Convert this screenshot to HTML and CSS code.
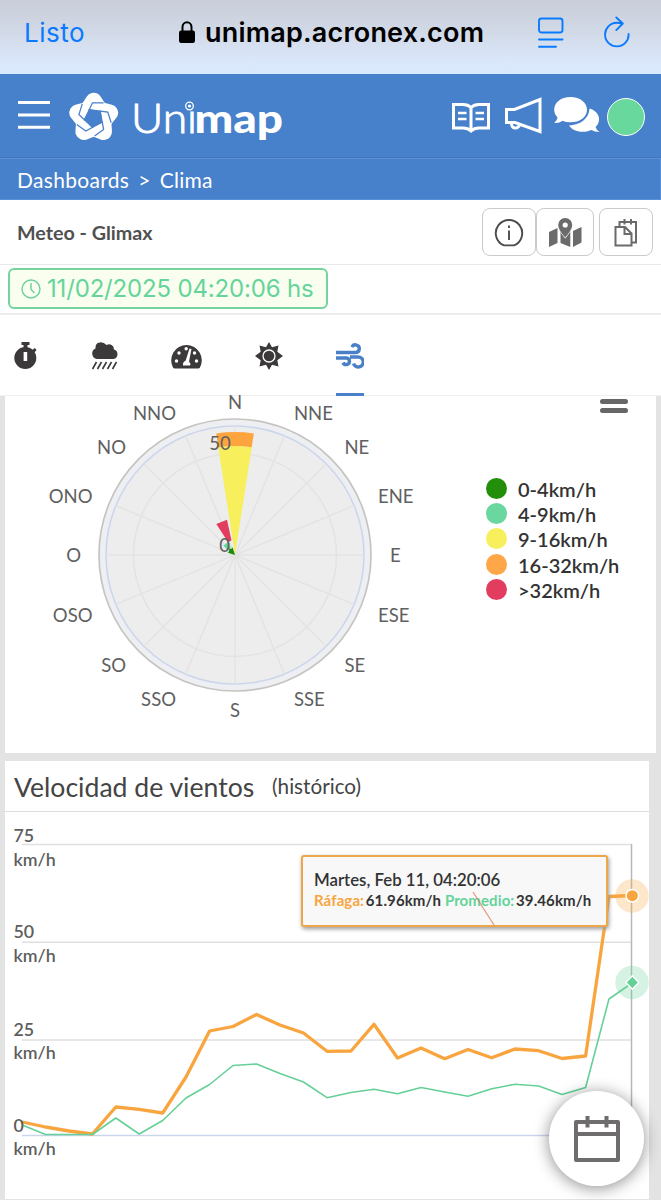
FILE: index.html
```html
<!DOCTYPE html>
<html lang="es">
<head>
    <meta charset="UTF-8">
    <title>Unimap - Clima</title>
    <link rel="stylesheet" href="styles.css">
</head>
<body>
    <!-- barra del navegador -->
    <div class="browserBar">
        <a class="done">Listo</a>
        <div class="url">
            <svg width="16" height="22" viewBox="0 0 16 22"><path d="M3.5 11V6a4.5 4.8 0 0 1 9 0v5" fill="none" stroke="#000" stroke-width="2"/><rect x="0" y="9.5" width="16" height="12.5" rx="2.2"/></svg>
            <span>unimap.acronex.com</span>
        </div>
        <svg class="reader" width="26" height="32" viewBox="0 0 26 32" fill="none" stroke="#0a7aff" stroke-width="1.9" stroke-linecap="round"><rect x="1" y="2.5" width="23.5" height="14" rx="2.5"/><path d="M1 23.5h23.5M1 30.7h17"/></svg>
        <svg class="reload" width="26" height="32" viewBox="0 0 26 32" fill="none" stroke="#0a7aff" stroke-width="1.9" stroke-linecap="round" stroke-linejoin="round"><path d="M24.6 18A11.8 11.8 0 1 1 12.8 6.8c2 0 4 .3 5.500.8M12.3 1.500l6.500 6-6.500 6.600"/></svg>
    </div>

    <header>
        <svg class="burger" width="32" height="30" viewBox="0 0 32 30" stroke="#fff" stroke-width="3"><path d="M0 2.5h32M0 15h32M0 27.3h32"/></svg>
        <svg class="logo" width="216" height="52" viewBox="68 91 216 52">
            <defs>
                <path id="lobe" d="M-5.5 -7.5L0 -16.3L5.5 -7.5"/>
                <path id="gap" d="M-9.2 2.3L-1.2 -14.6H9.5"/>
            </defs>
            <g transform="translate(93.7 118) scale(1.04)">
                <g class="lobes">
                    <use href="#lobe"/>
                    <use href="#lobe" transform="rotate(72)"/>
                    <use href="#lobe" transform="rotate(144)"/>
                    <use href="#lobe" transform="rotate(216)"/>
                    <use href="#lobe" transform="rotate(288)"/>
                </g>
                <path class="hole" d="M-3.8 -8.5L6.9 -6.2L8.1 4.6L-1.9 9.1L-9.2 1z"/>
                <g class="gaps">
                    <use href="#gap"/>
                    <use href="#gap" transform="rotate(72)"/>
                    <use href="#gap" transform="rotate(144)"/>
                    <use href="#gap" transform="rotate(216)"/>
                    <use href="#gap" transform="rotate(288)"/>
                </g>
            </g>
            <text x="131" y="133" class="logoThin" textLength="66" lengthAdjust="spacingAndGlyphs">Unı</text>
            <text x="194.5" y="133" class="logoBold" textLength="88.5" lengthAdjust="spacingAndGlyphs">map</text>
            <circle cx="189.5" cy="106" r="3.8" fill="#4780cb" stroke="#fff" stroke-width="1.3"/>
            <circle cx="189.5" cy="106" r="1.6" fill="#fff"/>
        </svg>
        <svg class="book" width="38" height="31" viewBox="0 0 38 31" fill="none" stroke="#fff" stroke-width="3"><path d="M1.5 2.5H11q5 0 8 3q3-3 8-3h9.5v23.5H27q-5 0-8 3q-3-3-8-3H1.5zM19 5v23"/><path d="M6 11h8.5M6 17h8.5M23.5 11H32M23.5 17H32" stroke-width="2.5"/></svg>
        <svg class="horn" width="37" height="37" viewBox="0 0 37 37" fill="none" stroke="#fff" stroke-width="3"><path d="M1.5 12.5h8L35 2.5v32L10 25.5H1.5z"/><path d="M6.5 26.5a4 4 0 1 0 8 1"/></svg>
        <svg class="chat" width="46" height="36" viewBox="0 0 46 36" fill="#fff"><path d="M35.5 11.5C42 13.5 45.5 18 45 23c-.2 3-1.5 5-3.5 7q1 3 4 5-5 0-8-2c-10 4-19 1-22.5-4.5C26 28 35 22 35.5 11.5z"/><path d="M16.5 0C26 0 33 5.5 33 12.7S26 25.3 16.5 25.3q-4.5 0-8-1.6Q5 26.3.3 25.8 3.5 23.5 3.5 20.3.2 17 .2 12.7C.2 5.5 7 0 16.5 0z"/></svg>
        <span class="avatar"></span>
    </header>

    <nav class="breadcrumb"><a>Dashboards</a><span>&gt;</span><a>Clima</a></nav>

    <section class="titleBar">
        <h1>Meteo - Glimax</h1>
        <button class="info"><svg width="30" height="30" viewBox="0 0 30 30" fill="none" stroke="#4c4c4c" stroke-width="1.9"><path d="M10 27.4a13.2 13.2 0 1 1 10 0z"/><path d="M15 12.5v9.5"/><path d="M15 7.5v2.5"/></svg></button>
        <button class="map"><svg width="33" height="30" viewBox="0 0 33 30" fill="#6b6b6b"><path d="M0 14l8.5-4v15L0 29zM11.5 10q1 5 4.5 9 4-4 5.3-8.5V29l-9.8-4zM24 13l8.5-4v15.5L24 29z"/><path fill-rule="evenodd" d="M16.2 0a7 7 0 0 1 7 7c0 4-4 9-7 12.5-3-3.5-7-8.5-7-12.5a7 7 0 0 1 7-7zm0 4.4a2.6 2.6 0 1 0 0 5.2 2.6 2.6 0 0 0 0-5.2z" stroke="#fff" stroke-width="1.2" paint-order="stroke"/></svg></button>
        <button class="copy"><svg width="24" height="28" viewBox="0 0 24 28" fill="none" stroke="#6b6b6b" stroke-width="2"><path d="M5.5 7V3H22v20.5h-4M10.5 0v5.5M17 0v5.5"/><path d="M1.5 8h9.5l6.5 6.5V26.5h-16zM10.5 8v7h7"/></svg></button>
    </section>

    <section class="dateBar">
        <div class="date">
            <svg width="20" height="20" viewBox="0 0 20 20" fill="none" stroke="#6ad19b" stroke-width="1.4"><circle cx="10" cy="10" r="9"/><path d="M10 4v6.5l3.5 3.5"/></svg>
            <span>11/02/2025 04:20:06 hs</span>
        </div>
    </section>

    <section class="tabs">
        <a><svg width="24" height="28" viewBox="0 0 24 28" fill="#3b393a"><path d="M7.5 0h8v3h-2v3h-4V3h-2zM18 8l3-2 1.5 2-2 2.5z"/><path fill-rule="evenodd" d="M11.3 5a11 11 0 1 1 0 22 11 11 0 0 1 0-22zM9.6 10v9h3.6v-9z"/></svg></a>
        <a><svg width="28" height="28" viewBox="0 0 28 28"><path fill="#3b393a" d="M6 17a5.5 5.5 0 0 1-1.5-10.5C4.5 2 6.5.5 10 .3q3 0 5.5 2.7a5 5 0 0 1 7.5 4.5A4.9 4.9 0 0 1 22.5 17z"/><path d="M5.5 20l-4 7M10.5 20l-4 7M15.5 20l-4 7M20.5 20l-4 7M25.5 20l-4 7" stroke="#3b393a" stroke-width="1.6"/></svg></a>
        <a><svg width="31" height="26" viewBox="0 0 31 26"><path fill="#3b393a" d="M2 24.5A15.3 15.3 0 1 1 29 24.5q-.5 1-2 1H4q-1.5 0-2-1z"/><g fill="#fff"><circle cx="5.5" cy="18" r="1.7"/><circle cx="8" cy="10" r="1.7"/><circle cx="15.2" cy="5.8" r="1.7"/><circle cx="25.5" cy="18" r="1.7"/><circle cx="23.5" cy="10" r="1.7"/><path d="M18.5 5.5l2 .5-2.5 12.5q2 2 1 4h-7q-.5-3.5 2.7-5z"/></g></svg></a>
        <a><svg width="28" height="28" viewBox="0 0 28 28"><path fill="#3b393a" d="M14 0l3 5.2 6.5-1.7-1.2 6.2L28 14l-5.7 4.3 1.2 6.2-6.500-1.700-3 5.200-3-5.200-6.500 1.700 1.200-6.200L0 14l5.700-4.300L4.500 3.500 11 5.200z"/><circle cx="14" cy="14" r="6" fill="none" stroke="#fff" stroke-width="1.3"/></svg></a>
        <a class="active"><svg width="28" height="26" viewBox="0 0 28 26" fill="none" stroke="#4a80c8" stroke-width="3.4"><path d="M0 9.500h19.500a3.800 3.800 0 1 0-3.500-5.300M0 15h10.500a3.300 3.300 0 1 1-3.400 4.500M14 14h8.200a5 5 0 1 1-4.700 6.500"/></svg></a>
    </section>

    <main>
        <section class="card roseCard">
            <svg class="rose" width="450" height="357" viewBox="-230 -159 450 357">
                <circle r="136" fill="#eeeff2" stroke="#c6c4c1" stroke-width="1.7"/>
                <circle r="129" fill="#ededed" stroke="#ccd6eb" stroke-width="1.6"/>
                <g stroke="#e3e3e3" stroke-width="1.5" fill="none">
                    <circle r="101.5"/>
                    <path d="M-129 0H129M0-129V129M-91.2-91.2L91.2 91.2M-91.2 91.2L91.2-91.2M-119.2-49.4L119.2 49.4M-119.2 49.4L119.2-49.4M-49.4-119.2L49.4 119.2M-49.4 119.2L49.4-119.2"/>
                </g>
                <path fill="#f7ef5b" d="M0 0L-16.7-107.7A109 109 0 0 1 16.7-107.7z"/>
                <path fill="#fea43f" d="M-16.7-107.7L-18.8-121.5A123 123 0 0 1 18.8-121.5L16.7-107.7A109 109 0 0 0-16.7-107.7z"/>
                <path fill="#e23d5e" d="M-18.7-31L-8-35.3-3.5-14.5-7-13z"/>
                <path fill="#69d79c" d="M-11.7-9.5L-7-13-4-7.5-7.5-5z"/>
                <path fill="#1b8a07" d="M0 0L-7-2.200-5.800-4.200-6-6.800-3.800-6-2.500-7.800z"/>
                <g class="ticks">
                    <text x="-15" y="-105" text-anchor="middle">50</text>
                    <text x="-10.5" y="-3" text-anchor="middle">0</text>
                    <text x="0" y="-146.5" text-anchor="middle">N</text>
                    <text x="59" y="-135.5">NNE</text>
                    <text x="109.5" y="-101.5">NE</text>
                    <text x="143" y="-52">ENE</text>
                    <text x="155" y="7">E</text>
                    <text x="143" y="66.5">ESE</text>
                    <text x="109.5" y="116.5">SE</text>
                    <text x="59" y="150.5">SSE</text>
                    <text x="0" y="162" text-anchor="middle">S</text>
                    <text x="-59" y="150.5" text-anchor="end">SSO</text>
                    <text x="-109" y="116.5" text-anchor="end">SO</text>
                    <text x="-142.5" y="66.5" text-anchor="end">OSO</text>
                    <text x="-154" y="7" text-anchor="end">O</text>
                    <text x="-142.5" y="-52" text-anchor="end">ONO</text>
                    <text x="-109" y="-101.5" text-anchor="end">NO</text>
                    <text x="-59" y="-135.5" text-anchor="end">NNO</text>
                </g>
            </svg>
            <div class="roseSide">
                <div class="menuIcon"><i></i><i></i></div>
                <ul class="legend">
                    <li><i class="green"></i>0-4km/h</li>
                    <li><i class="mint"></i>4-9km/h</li>
                    <li><i class="yellow"></i>9-16km/h</li>
                    <li><i class="orange"></i>16-32km/h</li>
                    <li><i class="red"></i>&gt;32km/h</li>
                </ul>
            </div>
        </section>

        <section class="card windCard">
            <h2>Velocidad de vientos <small>(histórico)</small></h2>
            <svg class="windChart" width="644" height="387" viewBox="5 812 644 387">
                <path d="M22 844.5H632M22 942.3H632M22 1040H632" stroke="#e0e0e0" stroke-width="1.5"/>
                <path d="M22 1135.5H632" stroke="#ccd6eb" stroke-width="1.5"/>
                <path d="M631.5 844V1136" stroke="#b8b8b8" stroke-width="1.5"/>
                <polyline fill="none" stroke="#f9a53f" stroke-width="3.3" stroke-linejoin="round" points="22.2,1122 45.5,1127 69,1131 92.4,1134 115.8,1107 139.2,1109.3 162.7,1113 186,1077 209.6,1031 233,1026.5 256.5,1014.5 280,1025 303.5,1033 327,1051.3 351,1051 374,1024.3 397.5,1058 421,1048 444.7,1058.7 468,1049.5 491.7,1057.7 515,1049 538.7,1050.7 562,1058.5 585.6,1056 609,896.5 632,895.5"/>
                <polyline fill="none" stroke="#65d097" stroke-width="1.6" stroke-linejoin="round" points="22.2,1125 45.5,1134.5 69,1134.5 92.4,1134.5 115.8,1118 139.2,1134 162.7,1120.5 186,1098 209.6,1084.5 233,1065.5 256.5,1064 280,1073.5 303.5,1082 327,1097.7 351,1092.5 374,1089.3 397.5,1093.8 421,1087.5 444.7,1092 468,1096.3 491.7,1088.7 515,1084.3 538.7,1086 562,1094.5 585.6,1087.5 609,999 632,983"/>
                <circle cx="632" cy="896" r="16.7" fill="#f9a53f" opacity=".27"/>
                <circle cx="632.3" cy="895.7" r="6.3" fill="#f9a53f" stroke="#fff" stroke-width="1.5"/>
                <circle cx="632" cy="982.5" r="16.7" fill="#65d097" opacity=".27"/>
                <path d="M632.3 975.8l6.5 6.7-6.5 6.7-6.5-6.7z" fill="#65d097" stroke="#fff" stroke-width="1.5"/>
                <g class="axis">
                    <text x="13.5" y="842">75</text><text x="13.5" y="865.5">km/h</text>
                    <text x="13.5" y="938">50</text><text x="13.5" y="961.5">km/h</text>
                    <text x="13.5" y="1035.5">25</text><text x="13.5" y="1059">km/h</text>
                    <text x="13.5" y="1131.5">0</text><text x="13.5" y="1155">km/h</text>
                </g>
            </svg>
            <div class="tooltip">
                <b>Martes, Feb 11, 04:20:06</b>
                <p><span class="gust">Ráfaga:</span> 61.96km/h <span class="avg">Promedio:</span> 39.46km/h</p>
                <svg class="pointer" width="24" height="36" viewBox="0 0 24 36"><path d="M1 1L22 34" stroke="#dc6a42" stroke-width="1.3" opacity=".65"/></svg>
            </div>
        </section>
    </main>

    <!-- botón flotante del calendario -->
    <button class="calendarBtn">
        <svg width="46" height="46" viewBox="0 0 46 46" fill="none" stroke="#6f6c6d" stroke-width="4"><path d="M2 6h42v38H2zM2 18h42" stroke-linejoin="round"/><path d="M13.5 0v11.5M32.5 0v11.5"/></svg>
    </button>
</body>
</html>
```
FILE: styles.css
```css
:root{
    --blue: #4780cb;
    --mint: #65d49b;
    --orange: #f9a53f;
    --gray: #e3e3e3;
}
*{box-sizing: border-box;}
body{
    margin: 0;
    width: 661px;
    height: 1200px;
    overflow: hidden;
    font-family: Lato, sans-serif;
    color: #444;
    background-color: white;
}
svg{display: block; flex: none;}
button{
    padding: 0;
    border: none;
    background-color: white;
    cursor: pointer;
}

/*---------- barra del navegador ----------*/
.browserBar{
    display: flex;
    align-items: flex-start;
    height: 74px;
    padding: 16px 30px 0 24px;
    font-family: Inter, sans-serif;
    background: linear-gradient(#c9cdd8, #d2dae8 45%, #dbe9fd 90%);
}
.done{
    width: 155px;
    font-size: 26px;
    line-height: 33px;
    letter-spacing: 0.5px;
    color: #0a7aff;
}
.url{
    display: flex;
    width: 359px;
    gap: 10px;
    font-size: 27px;
    font-weight: 600;
    line-height: 33px;
    letter-spacing: 0.2px;
    color: black;
}
.url svg{margin-top: 5px;}
.reader{margin-right: 40px;}

/*---------- cabecera ----------*/
header{
    display: flex;
    height: 84px;
    padding-left: 18px;
    background-color: var(--blue);
    border-bottom: 1px solid #4074bb;
}
.burger{margin-top: 26px;}
.logo{margin: 17px 0 0 18px;}
.lobes{fill: none; stroke: white; stroke-width: 16; stroke-linecap: round; stroke-linejoin: round;}
.hole{fill: var(--blue);}
.gaps{fill: none; stroke: var(--blue); stroke-width: 1.2;}
.logoThin{font: 300 42px Lato; fill: white; stroke: white; stroke-width: 1;}
.logoBold{font: 900 39px Lato; fill: white;}
.book{margin: 28px 0 0 168px;}
.horn{margin: 23px 0 0 15px;}
.chat{margin: 23px 0 0 12px;}
.avatar{
    width: 38px;
    height: 38px;
    margin: 24px 0 0 7px;
    border: 1px solid white;
    border-radius: 50%;
    background-color: #69d89c;
}
.breadcrumb{
    display: flex;
    gap: 9px;
    height: 42px;
    padding: 0 17px;
    font-size: 21px;
    line-height: 41px;
    letter-spacing: 0.3px;
    color: white;
    background-color: var(--blue);
    border: 1px solid #5a90d6;
    border-left-width: 0;
}

/*---------- título y botones ----------*/
.titleBar{
    display: flex;
    height: 65px;
    padding: 8px 8px 0 17px;
    border-bottom: 1px solid #e9e9e9;
}
h1{
    flex: 1;
    margin: 0;
    font-size: 19.7px;
    font-weight: 700;
    line-height: 50px;
    color: #505050;
}
.titleBar button{
    display: flex;
    justify-content: center;
    align-items: center;
    width: 54px;
    height: 48px;
    padding-top: 2px;
    border: 1px solid #cacaca;
    border-radius: 8px;
}
.titleBar .map{width: 58px;}
.titleBar .copy{margin-left: 5px;}

.dateBar{
    height: 50px;
    padding: 3px 8px;
    border-bottom: 2px solid #ececec;
}
.date{
    display: flex;
    align-items: center;
    gap: 6px;
    width: 320px;
    height: 41px;
    padding-left: 11px;
    font-family: Inter, sans-serif;
    font-size: 24px;
    letter-spacing: -0.17px;
    white-space: nowrap;
    color: var(--mint);
    border: 2px solid #76d3a0;
    border-radius: 6px;
    background-color: #f9feee;
}

/*---------- pestañas ----------*/
.tabs{
    display: flex;
    align-items: center;
    gap: 52.7px;
    height: 81px;
    padding: 1px 0 0 14px;
    border-bottom: 1px solid #efefef;
}
.tabs a{
    display: flex;
    align-items: center;
    height: 80px;
}
.tabs a.active{
    padding-top: 3px;
    border-bottom: 3px solid #4a80c8;
}

/*---------- tarjetas ----------*/
main{
    height: 805px;
    padding: 0 5px;
    background-color: var(--gray);
}
.card{background-color: white;}
.roseCard{
    display: flex;
    height: 357px;
}
.rose{overflow: visible;}
.ticks{font-size: 18.5px; fill: #606060;}
.roseSide{
    flex: 1;
    padding-left: 31px;
}
.menuIcon{
    display: flex;
    flex-direction: column;
    gap: 4px;
    width: 28px;
    margin: 3px 0 0 114px;
}
.menuIcon i{
    height: 5px;
    border-radius: 3px;
    background-color: #666;
}
.legend{
    margin: 63px 0 0;
    padding: 0;
    list-style: none;
    font-size: 20px;
    font-weight: 600;
    color: #333;
}
.legend li{
    display: flex;
    align-items: center;
    gap: 11px;
    height: 25.3px;
}
.legend i{
    width: 21px;
    height: 21px;
    margin-top: -1px;
    border-radius: 50%;
}
.green{background-color: #238e09;}
.mint{background-color: #69d79f;}
.yellow{background-color: #f7ef5b;}
.orange{background-color: #fea648;}
.red{background-color: #e23d5e;}

.windCard{
    position: relative;
    width: 644px;
    height: 438px;
    margin-top: 8px;
}
h2{
    height: 51px;
    margin: 0;
    padding-left: 9px;
    font-size: 26.6px;
    font-weight: 400;
    line-height: 50px;
    white-space: pre;
    border-bottom: 1px solid #ddd;
}
h2 small{font-size: 20.7px; margin-left: 11px; vertical-align: 3px;}
.axis{font-size: 17.8px; font-weight: 600; fill: #5d5d5d;}
.tooltip{
    position: absolute;
    top: 94px;
    left: 296px;
    width: 307px;
    height: 72px;
    padding: 12px 11px;
    font-size: 15px;
    font-weight: 700;
    color: #333;
    border: 2px solid #eda748;
    border-radius: 3px;
    background-color: #f8f8f8;
    box-shadow: 1px 2px 4px #999;
    white-space: nowrap;
}
.tooltip b{display: block; font-size: 16.8px; font-weight: 600; line-height: 22px;}
.tooltip p{margin: 0; line-height: 19px; letter-spacing: 0.1px;}
.gust{color: var(--orange); margin-right: -2px;}
.avg{color: var(--mint); margin-right: -2px;}
.pointer{
    position: absolute;
    left: 169px;
    top: 34px;
}

.calendarBtn{
    position: fixed;
    left: 549px;
    top: 1091px;
    display: flex;
    justify-content: center;
    align-items: center;
    width: 95px;
    height: 95px;
    border-radius: 50%;
    box-shadow: 0 2px 16px rgba(0,0,0,0.45);
}
```
